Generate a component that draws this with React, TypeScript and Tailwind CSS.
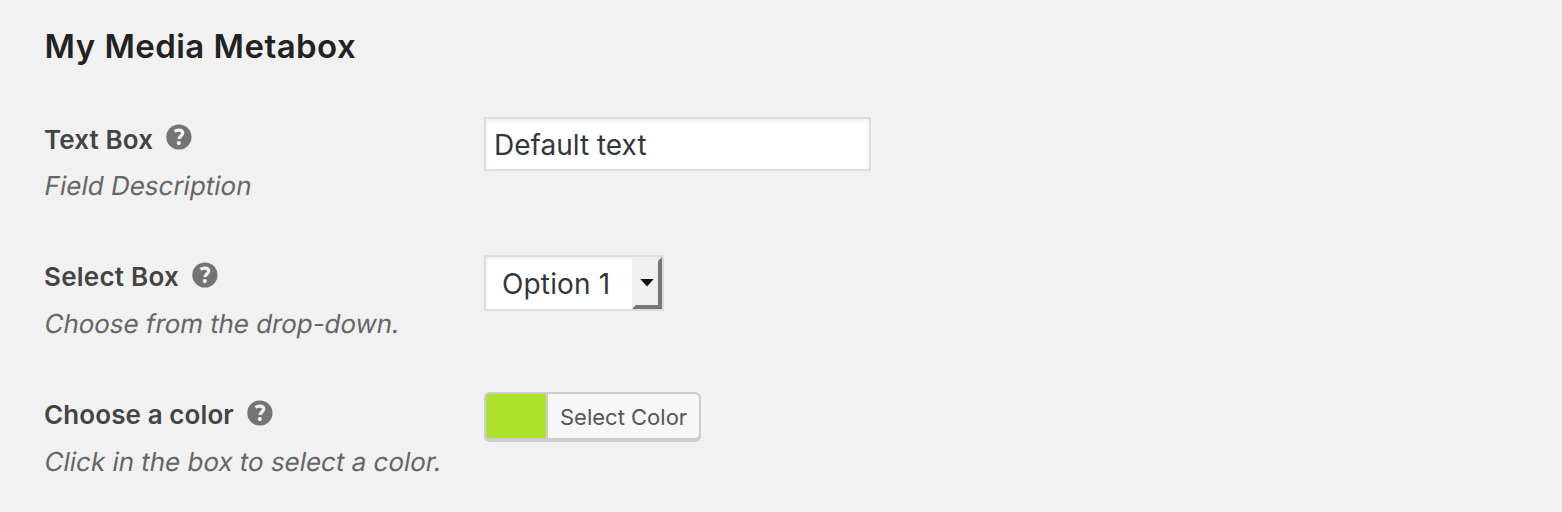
import type { ReactNode } from "react";

function HelpIcon() {
  return (
    <svg width="26" height="26" viewBox="0 0 26 26" aria-hidden="true">
      <circle cx="12.9" cy="13" r="12.6" fill="#747474" />
      <path d="M8.5 7.4C9.8 6.5 11.2 6.1 12.7 6.1c2.5 0 4 1.1 4 3 0 1.4-.8 2.2-1.9 3-1.1.8-1.7 1.3-1.7 2.8" fill="none" stroke="#f1f1f1" strokeWidth="3.3" />
      <circle cx="12.8" cy="19.1" r="2.1" fill="#f1f1f1" />
    </svg>
  );
}

interface FieldProps {
  label: string;
  labelClass: string;
  iconClass: string;
  description: string;
  descriptionClass: string;
  rowClass: string;
  children: ReactNode;
}

function Field({ label, labelClass, iconClass, description, descriptionClass, rowClass, children }: FieldProps) {
  return (
    <div className={`flex items-start ${rowClass}`}>
      <div className="w-[440px] shrink-0 whitespace-nowrap text-[26px]">
        <div className="flex h-[45px] items-center font-semibold leading-[45px] text-[#444]">
          <span className={`shrink-0 ${labelClass}`}>{label}</span>
          <span className={iconClass}><HelpIcon /></span>
        </div>
        <p className={`pl-px leading-[47px] text-[#666] ${descriptionClass}`}>
          <span className="inline-block -skew-x-[10deg]">{description}</span>
        </p>
      </div>
      {children}
    </div>
  );
}

export default function App() {
  return (
    <main className="h-[512px] w-full overflow-hidden bg-[#f1f1f1] pl-11 pt-[26px] font-['Inter',sans-serif]">
      <h2 className="mb-[51px] h-10 whitespace-nowrap pl-[0.6px] text-[33px] font-semibold leading-10 tracking-[0.45px] text-[#222]">
        My Media Metabox
      </h2>
      <div>
        <Field label="Text Box" labelClass="w-[122px] tracking-[0.12px]" iconClass="-mt-[5px]" description="Field Description" descriptionClass="" rowClass="h-[137px]">
          <input
            aria-label="Text Box"
            defaultValue="Default text"
            className="h-[54px] w-[387px] border-2 border-[#ddd] bg-white pl-2 pt-[2px] text-[28px] text-[#32373c] shadow-[inset_0_2px_4px_rgba(0,0,0,0.07)] outline-none"
          />
        </Field>
        <Field label="Select Box" labelClass="w-[148px] tracking-[0.25px]" iconClass="-mt-[3px]" description="Choose from the drop-down." descriptionClass="pt-px tracking-[-0.07px]" rowClass="h-[138px]">
          <button className="mt-px flex h-14 w-[180px] border-2 border-[#ddd] bg-white text-[28px] text-[#32373c] shadow-[inset_0_2px_4px_rgba(0,0,0,0.07)]">
            <span className="w-[146px] shrink-0 whitespace-nowrap pl-4 text-left leading-[54px] tracking-[0.15px]">Option 1</span>
            <span className="flex h-[52px] w-[30px] items-center justify-center border-4 border-b-[#767676] border-l-[#f0f0f0] border-r-[#767676] border-t-[#f0f0f0] bg-[#f0f0f0]">
              <svg width="14" height="8" viewBox="0 0 14 8" className="shrink-0"><path d="M0.3 0h13.4L7 7.6z" fill="#111" /></svg>
            </span>
          </button>
        </Field>
        <Field label="Choose a color" labelClass="w-[203px] tracking-[0.1px]" iconClass="-mt-[3px]" description="Click in the box to select a color." descriptionClass="pt-px tracking-[-0.03px]" rowClass="h-[120px]">
          <button className="flex h-12 w-[217px] overflow-hidden rounded-[6px] border-2 border-[#ccc] bg-[#ade12b] shadow-[0_2px_0_#ccc]">
            <span className="h-11 w-[60px] shrink-0" />
            <span className="h-11 flex-1 whitespace-nowrap rounded-r-[4px] border-l-2 border-[#ccc] bg-[#f7f7f7] pl-3 text-left text-[22px] leading-[46px] text-[#555]">Select Color</span>
          </button>
        </Field>
      </div>
    </main>
  );
}
